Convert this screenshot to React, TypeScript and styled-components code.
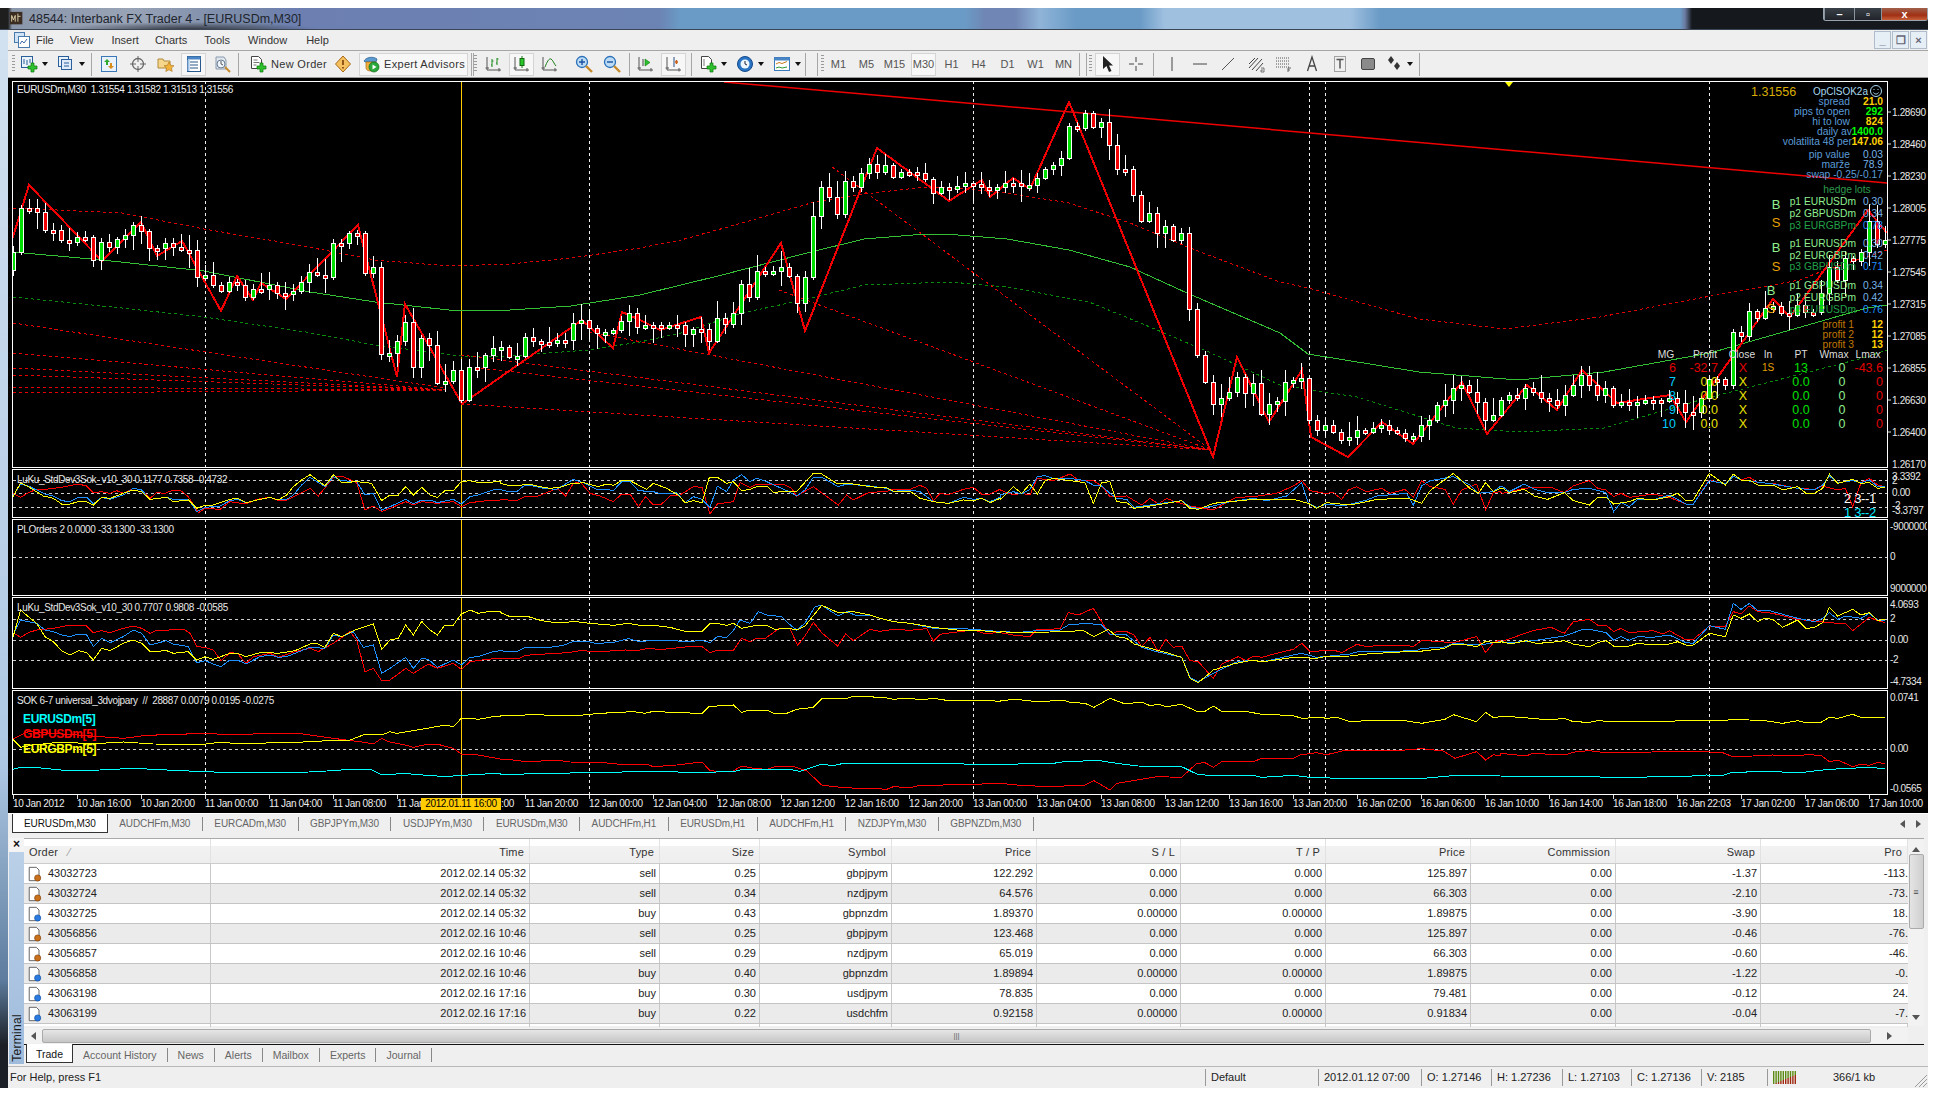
import styled, { createGlobalStyle } from "styled-components";
import { ReactNode } from "react";

const GlobalStyle = createGlobalStyle`
  html, body {
    margin: 0;
    background: #fff;
    font-family: "Liberation Sans", Arial, sans-serif;
    font-size: 11px;
    color: #222;
  }
`;

const Window = styled.div`
  width: 1928px;
  height: 1080px;
  margin-top: 8px;
  display: flex;
  flex-direction: column;
  overflow: hidden;
  background: linear-gradient(180deg, #d4e2f0 0%, #aec8e4 70%, #5d7c9e 90%, #1c2026 96%, #1c2026 100%);
`;

const TitleBar = styled.div`
  height: 21px;
  border-bottom: 1px solid #3a4656;
  display: flex;
  align-items: center;
  padding-left: 9px;
  gap: 4px;
  font-size: 12.5px;
  color: #20242c;
  background:
    radial-gradient(ellipse 130px 8px at 190px 22px, #2c3038 0%, rgba(44, 48, 56, 0) 100%),
    linear-gradient(90deg, #1e1e1e 0, #1e1e1e 8px, #8a96aa 12px, #98a3b6 130px, #7788a8 250px,
      #6c7fb0 290px, #6c84b4 660px, #6a9bc6 680px, #6a9bc6 965px, #7086b4 985px, #7086b4 1015px,
      #90b4d8 1040px, #6a9bc6 1075px, #6a9bc6 1140px, #a0c0e0 1165px, #a0c0e0 1350px, #6a9bc6 1380px,
      #6a9bc6 1680px, #6a7aa0 1685px, #15181c 1692px, #15181c 1928px);
`;

const WindowButtons = styled.div`
  margin-left: auto;
  align-self: flex-start;
  display: flex;
  height: 12px;
  border: 1px solid #9aa4ae;
  border-top: 0;
  border-radius: 0 0 3px 3px;
`;

const WindowButton = styled.div<{ $w: number; $close?: boolean }>`
  width: ${(p) => p.$w}px;
  display: flex;
  align-items: center;
  justify-content: center;
  color: #fff;
  font-weight: bold;
  font-size: 11px;
  border-left: 1px solid #8a949e;
  background: ${(p) =>
    p.$close
      ? "linear-gradient(180deg, #a0604a 0%, #a03014 60%, #c8603a 100%)"
      : "linear-gradient(180deg, #3a4048 0%, #20242a 100%)"};
`;

const Body = styled.div`
  margin-left: 8px;
  flex: 1;
  display: flex;
  flex-direction: column;
  background: #efefef;
`;

const MenuBar = styled.div`
  height: 20px;
  border-bottom: 1px solid #a6a6a6;
  display: flex;
  align-items: center;
  padding-left: 5px;
`;

const MenuItem = styled.span<{ $ml: number }>`
  margin-left: ${(p) => p.$ml}px;
  color: #333;
`;

const ChildButtons = styled.div`
  margin-left: auto;
  margin-right: 1px;
  display: flex;
  gap: 1px;
`;

const ChildButton = styled.div`
  width: 17px;
  height: 18px;
  border: 1px solid #aebccb;
  box-sizing: border-box;
  background: #e6eef6;
  color: #667;
  display: flex;
  align-items: center;
  justify-content: center;
  font-size: 11px;
  font-weight: bold;
`;

const Toolbar = styled.div`
  height: 26px;
  border-bottom: 1px solid #9c9c9c;
  display: flex;
  align-items: center;
`;

const Tool = styled.div<{ $w?: number; $ml?: number; $active?: boolean }>`
  width: ${(p) => p.$w ?? 25}px;
  height: 23px;
  margin-left: ${(p) => p.$ml ?? 3}px;
  flex: none;
  box-sizing: border-box;
  display: flex;
  align-items: center;
  justify-content: center;
  gap: 4px;
  color: #333;
  letter-spacing: 0.3px;
  border: 1px solid ${(p) => (p.$active ? "#d4d4d4" : "transparent")};
  background: ${(p) => (p.$active ? "#f7f7f7" : "transparent")};
`;

const Period = styled(Tool)`
  color: #555;
  letter-spacing: 0;
`;

const Caret = styled.div`
  width: 10px;
  flex: none;
  display: flex;
  justify-content: center;
  &::after {
    content: "";
    border: 3px solid transparent;
    border-top: 4px solid #111;
    border-bottom: 0;
  }
`;

const Sep = styled.div<{ $ml: number }>`
  width: 1px;
  height: 23px;
  margin-left: ${(p) => p.$ml}px;
  flex: none;
  background: #a6a6a6;
`;

const Grip = styled.div<{ $ml: number }>`
  width: 3px;
  height: 18px;
  margin-left: ${(p) => p.$ml}px;
  flex: none;
  background: repeating-linear-gradient(180deg, #9a9a9a 0 1px, transparent 1px 3px);
`;

const ChartArea = styled.div`
  position: relative;
  height: 735px;
  background: #000;
  padding: 3px 0 0 4px;
  box-sizing: border-box;
  color: #eee;
  font-size: 10px;
  letter-spacing: -0.35px;
`;

const Panels = styled.div`
  display: flex;
  flex-direction: column;
  gap: 1px;
`;

const PlotSvg = styled.svg`
  display: block;
  flex: none;
  font-family: "Liberation Sans", Arial, sans-serif;
  font-size: 10px;
  text {
    dominant-baseline: central;
    white-space: pre;
  }
`;

const OverlayGroup = styled.g`
  letter-spacing: 0;
`;

const TimeAxis = styled.div`
  display: flex;
  padding-left: 1px;
  height: 18px;
`;

const TimeCell = styled.div`
  position: relative;
  width: 64px;
  flex: none;
  line-height: 18px;
  white-space: nowrap;
  &::before {
    content: "";
    position: absolute;
    left: 0;
    top: 0;
    width: 1px;
    height: 4px;
    background: #ddd;
  }
`;

const DatePill = styled.div`
  position: absolute;
  left: 413px;
  top: 720px;
  width: 80px;
  height: 12px;
  line-height: 12px;
  text-align: center;
  white-space: nowrap;
  background: #ffcc00;
  color: #000;
`;

const ChartTabs = styled.div`
  height: 19px;
  border-top: 1px solid #fff;
  display: flex;
  padding-left: 4px;
  align-items: flex-end;
  color: #666;
  font-size: 10px;
  letter-spacing: -0.1px;
`;

const ChartTab = styled.div<{ $active?: boolean }>`
  height: ${(p) => (p.$active ? 19 : 14)}px;
  align-self: ${(p) => (p.$active ? "flex-end" : "center")};
  line-height: ${(p) => (p.$active ? 19 : 14)}px;
  padding: 0 ${(p) => (p.$active ? "11px" : "11.5px")};
  color: ${(p) => (p.$active ? "#111" : "#666")};
  background: ${(p) => (p.$active ? "#fff" : "transparent")};
  box-sizing: border-box;
  border: ${(p) => (p.$active ? "1px solid #333" : "0")};
  border-top: 0;
  border-right: ${(p) => (p.$active ? "1px solid #333" : "1px solid #888")};
`;

const TabArrows = styled.div`
  margin-left: auto;
  margin-right: 7px;
  align-self: center;
  display: flex;
  gap: 11px;
`;

const Terminal = styled.div`
  flex: 1;
  display: flex;
  padding-top: 5px;
  margin-bottom: 1px;
`;

const SideStrip = styled.div`
  width: 15px;
  margin-left: 1px;
  flex: none;
  display: flex;
  flex-direction: column;
`;

const CloseX = styled.div`
  height: 14px;
  text-align: center;
  font-weight: bold;
  font-size: 12px;
  line-height: 12px;
  background: #f4f4f4;
  color: #111;
`;

const TerminalLabel = styled.div`
  flex: 1;
  display: flex;
  align-items: flex-start;
  justify-content: center;
  background: linear-gradient(180deg, #bad0e8 0%, #9fbbdc 100%);
  margin-bottom: 1px;
  color: #1a1a1a;
  font-size: 12px;
  letter-spacing: 0.3px;
`;

const VerticalText = styled.span`
  writing-mode: vertical-rl;
  transform: rotate(180deg);
  margin-top: auto;
  margin-bottom: 2px;
`;

const TerminalMain = styled.div`
  flex: 1;
  min-width: 0;
  display: flex;
  flex-direction: column;
  margin-right: 4px;
`;

const TableWrap = styled.div`
  display: flex;
  height: 188px;
  background: #fff;
  border-top: 1px solid #aaa;
  box-sizing: border-box;
`;

const Table = styled.div`
  width: 1884px;
  flex: none;
`;

const columns = "187px 319px 130px 100px 132px 145px 144px 145px 145px 145px 145px 147px";

const HeaderRow = styled.div`
  height: 24px;
  display: grid;
  grid-template-columns: ${columns};
  background: linear-gradient(180deg, #fff 0%, #fff 30%, #f2f2f2 31%, #eee 100%);
  border-bottom: 1px solid #ccc;
  color: #333;
`;

const HeaderCell = styled.div<{ $left?: boolean }>`
  line-height: 27px;
  text-align: ${(p) => (p.$left ? "left" : "right")};
  padding: 0 5px;
  border-right: 1px solid #e2e2e2;
  letter-spacing: 0.2px;
  overflow: hidden;
  white-space: nowrap;
`;

const SortMark = styled.span`
  margin-left: 10px;
  color: #999;
`;

const Row = styled.div<{ $alt: boolean }>`
  height: 20px;
  box-sizing: border-box;
  display: grid;
  grid-template-columns: ${columns};
  background: ${(p) => (p.$alt ? "#ebebeb" : "#fff")};
  border-bottom: 1px solid #c4c4c4;
`;

const Cell = styled.div`
  line-height: 19px;
  text-align: right;
  padding-right: 3px;
  color: #222;
  border-right: 1px solid #c8c8c8;
  overflow: hidden;
  white-space: nowrap;
`;

const OrderCell = styled(Cell)`
  text-align: left;
  display: flex;
  align-items: center;
  gap: 5px;
  padding-left: 3px;
`;

const ClippedCell = styled(Cell)`
  border-right: 0;
  padding-right: 0;
`;

const RowStub = styled.div`
  height: 3px;
  display: grid;
  grid-template-columns: ${columns};
`;

const StubCell = styled.div`
  border-right: 1px solid #c8c8c8;
`;

const VScroll = styled.div`
  flex: 1;
  background: #f2f2f2;
  display: flex;
  flex-direction: column;
  align-items: center;
  color: #444;
`;

const VThumb = styled.div`
  margin-top: 2px;
  width: 15px;
  height: 75px;
  box-sizing: border-box;
  border: 1px solid #aaa;
  border-radius: 2px;
  background: linear-gradient(90deg, #e4e4e4, #cfcfcf);
  display: flex;
  align-items: center;
  justify-content: center;
  font-size: 9px;
  line-height: 4px;
`;

const ArrowUp = styled.div`
  margin-top: 8px;
  border: 4px solid transparent;
  border-bottom: 5px solid #555;
  border-top: 0;
`;

const ArrowDown = styled.div`
  margin-top: auto;
  margin-bottom: 6px;
  border: 4px solid transparent;
  border-top: 5px solid #555;
  border-bottom: 0;
`;

const HScroll = styled.div`
  height: 15px;
  margin-top: 2px;
  display: flex;
  align-items: center;
  background: #f2f2f2;
  margin-right: 16px;
`;

const HThumb = styled.div`
  flex: 1;
  height: 14px;
  box-sizing: border-box;
  border: 1px solid #aaa;
  border-radius: 2px;
  background: linear-gradient(180deg, #e6e6e6, #c6c6c6);
  display: flex;
  align-items: center;
  justify-content: center;
  color: #666;
  font-size: 8px;
`;

const HArrowCell = styled.div<{ $w: number }>`
  width: ${(p) => p.$w}px;
  flex: none;
  display: flex;
  justify-content: center;
`;

const ArrowLeft = styled.div`
  border: 4px solid transparent;
  border-right: 5px solid #555;
  border-left: 0;
`;

const ArrowRight = styled.div`
  border: 4px solid transparent;
  border-left: 5px solid #555;
  border-right: 0;
`;

const TerminalTabs = styled.div`
  height: 18px;
  margin-top: 1px;
  border-top: 1px solid #111;
  display: flex;
  padding-left: 2px;
  color: #666;
  font-size: 10.5px;
`;

const TerminalTab = styled.div<{ $active?: boolean }>`
  height: ${(p) => (p.$active ? 19 : 14)}px;
  margin-top: ${(p) => (p.$active ? -1 : 3)}px;
  line-height: ${(p) => (p.$active ? 21 : 14)}px;
  padding: 0 ${(p) => (p.$active ? "9px" : "10px")};
  box-sizing: border-box;
  background: ${(p) => (p.$active ? "#fff" : "transparent")};
  color: ${(p) => (p.$active ? "#111" : "#666")};
  border-right: 1px solid ${(p) => (p.$active ? "#333" : "#888")};
  border-left: ${(p) => (p.$active ? "1px solid #333" : "0")};
  border-bottom: ${(p) => (p.$active ? "1px solid #333" : "0")};
`;

const StatusBar = styled.div`
  height: 21px;
  border-top: 1px solid #b8b8b8;
  display: flex;
  align-items: center;
  position: relative;
  color: #222;
`;

const StatusField = styled.div<{ $w: number; $first?: boolean }>`
  width: ${(p) => p.$w}px;
  flex: none;
  box-sizing: border-box;
  height: 17px;
  line-height: 17px;
  padding-left: ${(p) => (p.$first ? 2 : 5)}px;
  border-left: ${(p) => (p.$first ? "0" : "1px solid #999")};
`;

const ConnField = styled(StatusField)`
  display: flex;
  align-items: center;
  gap: 36px;
`;

/* icons */
const Svg = ({ children, s = 18 }: { children: ReactNode; s?: number }) => (
  <svg width={s} height={s} viewBox="0 0 18 18" fill="none">
    {children}
  </svg>
);

const Plus = () => <path d="M11 8h3v3h3v3h-3v3h-3v-3H8v-3h3z" fill="#2fc02f" stroke="#0a7a0a" strokeWidth=".7" />;

const Axes = () => <path d="M2 2v13h14M0.5 13H4M14 13v3.5" stroke="#555" />;

const IconNewChart = () => (
  <Svg>
    <rect x="1.5" y="1.5" width="11" height="11" fill="#eaf2fb" stroke="#2a5f9a" />
    <path d="M4 9V4M7 10V5M10 8V4" stroke="#2a5f9a" />
    <Plus />
  </Svg>
);
const IconProfiles = () => (
  <Svg>
    <rect x="1.5" y="1.5" width="10" height="10" fill="#eaf2fb" stroke="#2a5f9a" />
    <rect x="4.5" y="4.5" width="10" height="10" fill="#dfeafb" stroke="#2a5f9a" />
    <path d="M7 8h5M7 11h5" stroke="#2a5f9a" />
  </Svg>
);
const IconMarket = () => (
  <Svg>
    <rect x="1.5" y="1.5" width="15" height="15" fill="#e9f1fa" stroke="#3a78b8" />
    <path d="M7 4l3 3H8v3H6V7H4z" fill="#2fa82f" />
    <path d="M11 14l-3-3h2V8h2v3h2z" fill="#d88a1a" />
  </Svg>
);
const IconCrosshair = () => (
  <Svg>
    <circle cx="9" cy="9" r="5.5" stroke="#666" strokeWidth="1.3" />
    <path d="M9 1v6M9 11v6M1 9h6M11 9h6" stroke="#666" />
  </Svg>
);
const IconFolderStar = () => (
  <Svg>
    <path d="M1 4h5l1 2h6v7H1z" fill="#f6d68a" stroke="#b08a3a" />
    <path d="M12 7l1.6 3.3 3.4.4-2.5 2.3.7 3.5-3.2-1.8-3.2 1.8.7-3.5L7 10.7l3.4-.4z" fill="#f2b23a" stroke="#a8701a" strokeWidth=".6" />
  </Svg>
);
const IconTerminal = () => (
  <Svg>
    <rect x="2.5" y="1.5" width="13" height="15" fill="#fff" stroke="#28588c" />
    <rect x="2.5" y="1.5" width="13" height="3" fill="#4a86c6" />
    <path d="M5 7h8M5 10h8M5 13h8" stroke="#28588c" />
    <rect x="2.5" y="5" width="2" height="11" fill="#9cc0e6" />
  </Svg>
);
const IconTester = () => (
  <Svg>
    <path d="M3 2h8l2 3v9H3z" fill="#dfe6ee" stroke="#8a9aae" />
    <circle cx="8" cy="9" r="4" fill="#eef4fb" stroke="#6a7c92" />
    <path d="M8 6v3l2 1" stroke="#555" />
    <path d="M12 12l5 5" stroke="#c88a2a" strokeWidth="2" />
  </Svg>
);
const IconNewOrder = () => (
  <Svg>
    <path d="M2.5 1.5h7l3 3v9h-10z" fill="#fff" stroke="#444" />
    <path d="M4.5 5h4M4.5 7.5h6M4.5 10h3" stroke="#777" />
    <Plus />
  </Svg>
);
const IconWarn = () => (
  <Svg>
    <path d="M9 1l7.5 8L9 17 1.5 9z" fill="#f4c060" stroke="#a86a14" />
    <path d="M9 5v5M9 12v1.5" stroke="#7a3c08" strokeWidth="1.6" />
  </Svg>
);
const IconExpert = () => (
  <Svg>
    <path d="M2 6c2-4 9-5 13-2l-1 3H3z" fill="#5a9ad0" stroke="#2a5a8a" strokeWidth=".7" />
    <path d="M4 7h10v6c0 2-2 3-5 3s-5-1-5-3z" fill="#f0b040" stroke="#a87018" strokeWidth=".7" />
    <circle cx="12" cy="12" r="5" fill="#2aa83a" stroke="#0c6a1a" strokeWidth=".7" />
    <path d="M10.5 9.5l4 2.5-4 2.5z" fill="#fff" />
  </Svg>
);
const IconBars = () => (
  <Svg>
    <Axes />
    <path d="M7 4v8M6 10h1M7 6h1.5M12 3v7M11 8h1M12 4h1.5" stroke="#1a8a1a" />
  </Svg>
);
const IconCandles = () => (
  <Svg>
    <Axes />
    <path d="M9 1v12" stroke="#1a7a1a" />
    <rect x="7" y="3.5" width="4" height="7" fill="#29c729" stroke="#116a11" />
  </Svg>
);
const IconLine = () => (
  <Svg>
    <Axes />
    <path d="M4 12c2-5 4-9 6-8s3 5 5 7" stroke="#1a7a1a" />
  </Svg>
);
const IconZoom = ({ plus }: { plus?: boolean }) => (
  <Svg>
    <circle cx="7" cy="7" r="5.5" fill="#bcdcf6" stroke="#2a70b8" strokeWidth="1.3" />
    <path d={plus ? "M4 7h6M7 4v6" : "M4 7h6"} stroke="#1a50a0" strokeWidth="1.4" />
    <path d="M11 11l6 6" stroke="#c88a2a" strokeWidth="2.4" />
  </Svg>
);
const IconScroll = () => (
  <Svg>
    <Axes />
    <path d="M6 4v7" stroke="#444" />
    <path d="M8 4l5 3.5-5 3.5z" fill="#2fc02f" stroke="#117a11" strokeWidth=".6" />
  </Svg>
);
const IconShift = () => (
  <Svg>
    <Axes />
    <path d="M9 2v10" stroke="#28508c" />
    <path d="M10 7h3M11.5 5v4" stroke="#c8601a" strokeWidth="1.5" />
  </Svg>
);
const IconIndicators = () => (
  <Svg>
    <path d="M2.5 1.5h7l3 3v9h-10z" fill="#fff" stroke="#444" />
    <path d="M5 4v7" stroke="#777" />
    <Plus />
  </Svg>
);
const IconClock = () => (
  <Svg>
    <circle cx="9" cy="9" r="7.5" fill="#2a74c4" stroke="#144a8c" />
    <circle cx="9" cy="9" r="4.5" fill="#eef6fd" />
    <path d="M9 6v3l2 1" stroke="#223" />
  </Svg>
);
const IconTemplate = () => (
  <Svg>
    <rect x="1.5" y="2.5" width="15" height="13" fill="#fff" stroke="#3a78b8" />
    <rect x="1.5" y="2.5" width="15" height="3" fill="#4a86c6" />
    <path d="M3 9l3-1.5 3 1 5-2" stroke="#c87a1a" />
    <path d="M3 13l3-1 3 1 5-1" stroke="#2f9a2f" />
  </Svg>
);
const IconCursor = () => (
  <Svg>
    <path d="M4 1v13l3.5-3 2.5 6 2.5-1-2.5-5.5H14z" fill="#222" />
  </Svg>
);
const IconCross = () => (
  <Svg>
    <path d="M9 2v5M9 11v5M2 9h5M11 9h5" stroke="#444" />
  </Svg>
);
const IconChannel = () => (
  <Svg>
    <path d="M2 13L11 3M5 15L15 4M2 9l6-6M9 16l7-8" stroke="#444" />
    <path d="M14 13h3v4h-3v-2h2" stroke="#444" strokeWidth=".7" />
  </Svg>
);
const IconFibo = () => (
  <Svg>
    <path d="M1 3h14M1 6h14M1 9h14M1 12h14" stroke="#555" strokeDasharray="1 1" />
    <path d="M13 13h3M13 13v4M13 15h2" stroke="#444" strokeWidth=".8" />
  </Svg>
);
const IconLabel = () => (
  <Svg>
    <rect x="3.5" y="1.5" width="11" height="15" stroke="#555" strokeDasharray="1 1" />
    <path d="M5.5 4.5h7M9 4.5v9" stroke="#555" strokeWidth="1.5" />
  </Svg>
);
const IconRect = () => (
  <Svg>
    <rect x="2.5" y="3.5" width="13" height="11" rx="1.5" fill="#8a8a8a" stroke="#444" />
  </Svg>
);
const IconArrows = () => (
  <Svg>
    <path d="M6 1l3 4H3zM6 9L3 5h6zM12 7l3 4H9zM12 15l-3-4h6z" fill="#333" />
  </Svg>
);
const IconTicket = ({ sell }: { sell: boolean }) => (
  <Svg s={16}>
    <path d="M2.5 1.5h8l3 3v12h-11z" fill="#fff" stroke="#555" />
    <circle cx="12" cy="13.5" r="3.5" fill={sell ? "#c8701a" : "#2a7ae0"} stroke={sell ? "#7a3c08" : "#0c4aa0"} strokeWidth=".7" />
  </Svg>
);
const AppIcon = () => (
  <Svg>
    <rect x="1.5" y="1.5" width="10" height="10" fill="#cfe2f6" stroke="#4a7aaa" />
    <rect x="5.5" y="5.5" width="11" height="11" fill="#fff" stroke="#4a7aaa" />
    <path d="M7 13l2-3 2 2 3-4" stroke="#3a6aaa" />
  </Svg>
);
const TitleIcon = () => (
  <Svg s={16}>
    <rect x="1" y="1" width="14" height="14" fill="#3a2c20" />
    <path d="M3 12V5l2 5 2-5v7M10 12V3M10 6h3" stroke="#e8d8b0" />
  </Svg>
);
const ConnIcon = () => (
  <svg width="24" height="13" viewBox="0 0 24 13">
    {Array.from({ length: 10 }, (_, i) => (
      <g key={i}>
        <rect x={i * 2.4} y={0} width={1.4} height={13 - i} fill="#5a8a10" />
        <rect x={i * 2.4} y={13 - i} width={1.4} height={i} fill="#a02810" />
      </g>
    ))}
  </svg>
);
const GripSvg = styled.svg`
  position: absolute;
  right: 0;
  bottom: 0;
`;
const ResizeGrip = () => (
  <GripSvg width="16" height="16" viewBox="0 0 16 16">
    <path d="M15 3L3 15M15 7L7 15M15 11l-4 4" stroke="#999" />
  </GripSvg>
);

/* chart data, in page pixels */
const closes = [
  252, 208, 208, 212, 230, 230, 240, 242, 237, 237, 260, 242, 247, 239, 235, 225, 231, 248, 248, 243,
  247, 250, 250, 277, 275, 285, 291, 282, 285, 297, 289, 289, 285, 293, 294, 291, 282, 272, 275, 277,
  243, 243, 233, 233, 273, 267, 354, 353, 341, 322, 367, 338, 345, 383, 381, 370, 400, 367, 367, 355,
  348, 347, 357, 356, 337, 341, 342, 342, 340, 340, 323, 320, 328, 333, 332, 330, 321, 313, 327,
  325, 325, 327, 325, 325, 334, 329, 329, 341, 318, 324, 313, 284, 297, 271, 273, 271, 267, 276, 303,
  277, 216, 187, 197, 214, 181, 187, 173, 164, 172, 165, 177, 172, 172, 173, 179, 193, 187, 189, 186,
  183, 184, 187, 190, 187, 183, 183, 186, 185, 178, 169, 165, 158, 126, 128, 113, 127, 122, 145, 169,
  169, 195, 221, 213, 233, 226, 240, 233, 309, 355, 382, 404, 398, 392, 377, 393, 383, 414, 404, 401,
  382, 380, 378, 420, 430, 425, 432, 440, 437, 430, 432, 428, 425, 430, 433, 438, 436, 425, 420, 405,
  400, 388, 385, 392, 402, 420, 415, 400, 395, 398, 388, 392, 398, 400, 405, 395, 385, 375, 385, 395, 388,
  405, 402, 405, 402, 400, 400, 401, 398, 403, 412, 412, 398, 379, 379, 385, 332, 336, 311, 318, 308,
  306, 313, 315, 305, 312, 312, 293, 267, 280, 258, 261, 252, 221, 244, 240,
];

const noise = (i: number, salt: number) => {
  const v = Math.abs(Math.sin(i * 12.9898 + salt) * 43758.5453) % 1;
  return 2 + v * v * 15;
};

const zigzag =
  "12,240 29,185 102,261 141,222 157,256 182,241 221,311 237,276 253,300 261,283 286,299 358,225 397,377 405,304 462,404 582,320 613,348 622,312 640,320 660,330 701,317 709,353 781,243 805,331 877,148 949,201 982,180 990,197 1013,178 1030,189 1069,102 1213,457 1237,357 1269,422 1302,370 1311,437 1348,457 1382,422 1413,444 1462,382 1487,434 1527,385 1557,410 1582,370 1617,403 1670,395 1686,422 1773,299 1790,317 1868,210 1887,233";
const maMiddle =
  "13,252 102,260 204,271 310,292 375,302 449,310 510,310 571,306 640,295 722,275 803,254 864,239 926,234 958,235 1007,239 1069,250 1130,267 1187,293 1280,333 1308,354 1419,372 1518,380 1604,372 1710,353 1867,308 1887,305";
const maUpper =
  "13,208 122,213 204,229 298,245 375,260 449,266 510,264 571,258 640,248 681,240 742,223 811,203 864,194 926,187 967,189 1007,193 1069,203 1130,223 1195,250 1280,282 1308,288 1419,319 1505,329 1600,317 1700,298 1800,280 1820,272 1887,250";
const maLower =
  "13,297 122,308 204,317 306,332 375,345 461,356 510,356 588,350 640,342 681,333 742,313 803,300 864,285 950,282 1007,287 1089,302 1150,327 1211,353 1280,385 1357,397 1456,428 1518,432 1604,428 1700,400 1867,357 1887,350";
const fans = [
  [13, 323, 445, 388], [13, 353, 445, 390], [13, 368, 445, 390], [13, 375, 445, 390], [13, 387, 445, 390], [13, 393, 445, 390],
  [832, 167, 1211, 450], [779, 290, 1211, 450], [589, 332, 1211, 450], [461, 355, 1211, 450], [469, 367, 1211, 450], [461, 404, 1211, 450],
];
const dayLines = [205, 589, 973, 1309, 1325, 1709];

const trace = (...parts: [number, string][]) =>
  parts
    .map(([ox, pts]) =>
      pts
        .split(" ")
        .map((p) => {
          const [x, y] = p.split(",").map(Number);
          return `${ox + x / 3},${460 + y / 3}`;
        })
        .join(" ")
    )
    .join(" ");

const std1 = [
  trace(
    [0, "38,100 62,112 85,98 110,88 135,88 185,82 235,72 260,78 280,98 305,95 330,100 350,92 370,100 400,85 425,90 450,115 470,98 495,100 520,90 540,90 565,110 595,158 616,145 660,148 690,125 738,132 770,118 810,112 835,122 860,120 880,110 930,85 955,108 1000,52 1025,48 1070,68 1095,150 1120,138 1145,155 1170,145 1217,125 1240,135 1265,125 1310,130 1360,125 1384,140 1410,128 1460,122 1500,120"],
    [500, "0,118 50,122 75,110 110,110 160,90 175,88 197,108 220,70 240,65 270,100 300,108 340,125 365,102 390,102 415,140 437,110 460,135 485,132 510,108 540,105 580,80 606,82 630,162 652,132 700,125 720,68 750,82 770,72 810,72 850,72 875,85 890,108 940,80 1015,135 1040,105 1060,120 1105,98 1160,94 1180,88 1230,88 1260,76 1280,85 1300,122 1320,100 1345,104 1390,88 1420,82 1445,102 1470,102 1500,88"],
    [1000, "0,90 40,105 65,100 90,105 112,55 160,62 210,42 235,60 280,62 305,78 330,110 380,108 425,135 450,115 475,132 500,115 525,125 570,138 640,150 690,122 710,112 760,110 830,100 880,78 905,62 930,92 975,100 1000,98 1025,118 1045,90 1070,80 1100,95 1145,85 1170,100 1215,88 1240,112 1265,62 1290,80 1335,88 1360,132 1385,90 1430,72 1457,150 1480,98 1500,95"],
    [1436, "200,100 265,85 295,82 345,82 385,98 412,78 460,62 485,85 510,90 533,110 555,100 580,112 650,102 700,112 750,132 772,132 820,60 868,72 892,48 915,60 940,52 965,68 1010,70 1085,85 1135,88 1160,78 1205,90 1228,85 1250,140 1275,68 1300,55 1325,75 1348,80"]
  ),
  trace(
    [0, "38,110 62,72 85,78 110,90 135,102 160,108 185,122 210,125 235,112 260,112 280,132 305,112 330,118 370,105 400,85 425,90 450,118 500,112 520,118 565,118 590,155 616,142 660,138 690,122 712,118 738,128 770,120 810,112 835,120 860,118 880,105 905,75 930,52 975,80 1000,50 1025,62 1070,65 1095,105 1120,100 1145,150 1170,140 1217,118 1240,132 1265,120 1290,120 1312,128 1360,118 1384,132 1410,110 1435,105 1480,90 1500,88"],
    [500, "0,88 25,95 50,95 75,75 100,78 130,85 170,88 220,58 250,68 295,90 320,88 340,92 365,65 390,65 415,92 460,95 485,102 530,98 555,128 580,110 606,118 630,142 652,78 680,95 700,60 725,44 750,65 770,55 800,65 815,72 865,94 890,108 915,90 940,52 965,52 1015,80 1040,72 1110,78 1160,85 1180,94 1230,90 1260,95 1300,125 1345,130 1390,112 1420,118 1445,115 1470,125 1500,112"],
    [1000, "0,105 40,95 65,102 90,88 112,50 135,47 160,55 210,55 255,62 280,75 305,78 330,100 350,115 380,118 402,142 450,135 500,128 545,122 570,140 595,146 640,138 690,125 760,115 800,122 860,108 905,68 925,130 950,142 980,132 1030,138 1100,120 1130,108 1220,100 1240,135 1265,78 1290,62 1360,50 1410,75 1435,100 1480,95 1500,80"],
    [1436, "200,80 220,95 265,72 295,88 335,98 385,98 412,88 460,85 510,98 533,155 555,128 580,140 605,118 650,120 700,105 750,132 772,132 820,62 868,72 892,48 915,60 1010,72 1085,85 1135,90 1160,75 1180,48 1205,68 1250,62 1275,68 1300,60 1325,80 1348,80"]
  ),
  trace(
    [0, "38,112 62,68 85,80 130,108 160,115 185,132 210,132 235,125 260,125 280,135 305,112 330,115 370,100 400,90 425,95 450,118 500,112 520,125 565,120 590,145 616,135 640,135 660,128 690,118 712,115 738,128 770,120 810,112 835,120 860,105 880,80 905,60 930,44 975,78 1000,44 1025,68 1070,65 1115,70 1145,122 1170,105 1195,105 1217,80 1240,105 1265,82 1290,105 1312,112 1335,92 1360,92 1384,65 1410,62 1435,68 1500,65"],
    [500, "0,70 25,76 60,76 85,72 120,80 150,85 180,82 210,72 250,68 295,80 320,72 340,76 365,62 390,62 440,88 460,70 500,85 535,105 555,128 580,122 606,128 628,52 652,52 680,70 700,65 725,92 750,88 775,78 800,78 820,97 865,94 890,94 940,40 965,42 1010,70 1060,72 1110,80 1160,84 1180,94 1230,94 1260,115 1300,125 1345,130 1390,120 1420,122 1445,115 1470,128 1500,115"],
    [1000, "0,120 40,80 65,100 90,72 112,102 135,62 160,55 210,62 255,68 280,130 305,68 330,65 350,125 380,128 402,145 450,138 500,130 545,122 570,145 595,148 640,130 690,125 760,118 800,120 880,118 925,130 950,145 980,128 1050,135 1100,125 1130,118 1225,115 1265,130 1290,92 1360,40 1410,85 1435,100 1457,68 1480,95 1500,85"],
    [1436, "200,85 220,98 265,88 295,108 335,118 385,98 412,122 460,135 485,112 510,112 533,132 580,125 605,115 650,120 700,110 725,100 750,122 772,120 820,40 868,75 892,42 915,60 940,60 965,75 1010,75 1040,90 1085,80 1110,100 1135,100 1160,85 1180,42 1205,70 1250,58 1275,70 1300,68 1325,85 1348,82"]
  ),
];

const std2 = [
  trace(
    [0, "38,518 62,532 85,518 110,510 160,505 210,495 260,498 280,518 305,512 330,518 370,505 400,498 425,505 450,520 470,510 495,512 520,508 555,510 570,520 590,560 616,562 640,570 663,602 690,578 712,580 738,610 760,590 810,580 835,592 885,575 930,565 955,575 1000,550 1050,515 1070,540 1095,635 1120,625 1145,662 1170,660 1217,625 1240,640 1285,612 1312,625 1360,610 1384,628 1410,605 1460,598 1500,595"],
    [500, "0,596 55,596 75,586 150,581 205,578 240,572 300,575 375,570 415,571 440,566 490,568 555,561 606,560 630,578 652,571 700,571 725,535 750,546 770,534 795,536 835,507 870,506 893,556 915,528 940,487 965,518 1013,558 1037,522 1060,542 1110,508 1140,514 1180,508 1230,511 1280,506 1300,543 1320,523 1370,516 1420,510 1460,522 1500,516"],
    [1000, "0,518 40,525 90,530 110,510 180,506 205,458 235,465 280,445 330,525 350,515 380,515 402,525 425,560 450,532 475,575 497,538 520,562 545,558 570,602 595,605 640,655 665,612 715,590 737,602 760,588 785,592 830,580 880,568 905,550 930,575 1000,570 1025,578 1070,553 1100,560 1145,555 1215,555 1240,560 1265,541 1360,548 1430,530 1457,578 1480,548 1500,540"],
    [1436, "195,545 225,535 290,512 345,502 385,520 412,485 460,478 485,495 510,495 533,515 555,505 580,518 650,512 680,522 700,512 750,540 772,538 820,498 868,498 892,455 915,462 940,438 965,455 1010,460 1085,478 1135,483 1180,488 1230,492 1250,512 1300,472 1325,482 1348,488"]
  ),
  trace(
    [0, "38,528 62,480 85,485 110,490 135,510 160,515 185,525 210,530 235,522 260,525 280,560 305,535 330,548 370,530 400,510 425,520 450,555 500,542 520,552 565,560 590,608 616,602 640,612 663,620 690,600 712,600 738,612 780,590 810,585 835,592 860,590 930,562 975,565 1000,525 1025,530 1060,515 1090,562 1120,555 1145,640 1170,625 1217,592 1240,625 1265,595 1285,598 1312,622 1360,600 1384,615 1410,592 1435,590 1480,575 1500,572"],
    [500, "0,572 25,575 50,575 75,562 150,562 190,556 220,544 270,546 290,551 345,546 385,536 415,544 510,540 555,546 606,541 630,548 652,530 680,532 700,512 720,480 750,490 775,455 800,465 845,470 865,490 890,510 915,490 945,440 965,436 1015,468 1040,455 1065,465 1110,465 1140,475 1180,485 1230,490 1300,505 1370,505 1420,508 1500,515"],
    [1000, "0,513 50,518 110,512 180,510 205,495 260,490 305,495 330,522 380,525 425,562 470,575 545,592 570,652 595,665 640,640 710,606 760,600 785,606 880,585 905,580 950,592 1050,582 1070,576 1130,575 1250,572 1265,565 1330,562 1360,550 1440,555 1500,545"],
    [1436, "195,545 225,548 300,541 340,535 385,528 435,510 460,508 510,518 533,540 555,530 580,541 605,530 650,532 700,525 750,548 772,550 820,497 868,508 892,430 915,448 940,430 965,452 1000,452 1085,475 1135,485 1160,475 1180,458 1205,478 1228,468 1275,475 1300,460 1325,480 1348,482"]
  ),
  trace(
    [0, "38,535 62,450 85,470 110,490 135,530 160,545 185,572 210,585 235,572 260,578 280,600 305,565 330,572 370,550 400,540 425,550 450,575 500,572 520,580 565,575 590,600 616,590 640,598 690,580 712,580 738,590 780,578 810,578 835,580 885,572 930,552 950,550 975,562 1000,520 1025,530 1070,508 1120,492 1145,568 1170,540 1195,535 1217,495 1240,525 1265,484 1290,510 1312,525 1335,495 1360,495 1384,462 1410,450 1435,460 1465,455 1500,455"],
    [500, "0,457 30,470 85,470 125,482 165,488 230,485 270,490 340,496 385,490 430,498 460,496 510,502 555,514 606,514 628,492 652,490 680,496 700,490 725,505 770,496 800,496 825,508 865,505 890,510 915,498 965,436 1015,458 1060,455 1110,465 1140,475 1180,485 1230,490 1300,502 1370,510 1420,510 1500,517"],
    [1000, "0,515 50,518 150,516 250,512 282,530 325,508 350,530 380,535 402,552 450,565 500,578 545,592 570,655 595,668 640,630 700,612 760,600 785,606 880,592 950,595 975,590 1050,588 1100,582 1200,576 1250,575 1330,566 1360,552 1400,555 1430,560 1455,545 1500,548"],
    [1436, "195,545 225,552 270,542 300,550 340,548 385,542 412,552 460,560 485,548 510,542 533,558 580,558 605,550 650,555 700,552 725,545 750,555 772,555 820,520 868,530 892,465 915,475 940,462 965,485 985,475 1010,478 1040,502 1085,480 1110,506 1135,502 1160,488 1180,442 1205,468 1250,448 1275,465 1300,458 1325,482 1348,478"]
  ),
];

const sok = [
  trace(
    [0, "38,838 62,825 85,815 160,820 300,830 370,835 440,826 620,820 700,825 800,820 910,822 1000,835 1100,848 1120,852 1145,835 1165,845 1215,855 1240,862 1285,852 1310,852 1360,865 1384,882 1435,885 1500,897"],
    [500, "0,898 40,900 70,904 180,902 210,906 300,907 380,915 440,913 460,920 530,915 606,906 628,930 652,935 700,933 725,918 760,925 800,928 830,918 875,918 920,932 965,975 1000,980 1070,985 1120,985 1160,988 1180,980 1230,983 1260,976 1300,978 1340,974 1420,973 1500,970"],
    [1000, "0,970 60,976 150,980 255,975 282,962 330,990 350,970 410,960 470,950 545,952 590,910 615,908 640,922 665,905 760,905 785,895 880,895 900,885 950,878 980,884 1040,870 1215,870 1265,866 1330,873 1365,895 1430,875 1457,900 1480,884 1500,888"],
    [1436, "195,880 270,888 290,880 385,885 420,875 460,872 500,877 800,875 860,878 890,890 950,888 1010,885 1085,888 1110,884 1155,886 1180,905 1205,900 1250,920 1275,912 1300,916 1325,907 1348,912"]
  ),
  trace(
    [0, "38,928 62,922 100,922 165,928 200,932 300,930 400,925 500,930 610,935 700,938 890,938 980,933 1050,928 1115,930 1145,945 1215,940 1240,943 1310,948 1360,948 1435,943 1500,940"],
    [500, "0,942 60,943 100,940 200,940 230,937 350,937 400,934 600,937 700,935 720,930 870,928 900,934 960,914 1005,916 1030,910 1100,912 1280,910 1500,914"],
    [1000, "0,913 160,910 200,904 300,902 350,910 415,918 545,920 590,942 640,948 760,946 785,952 880,946 930,952 1020,955 1270,955 1370,946 1500,948"],
    [1436, "195,948 380,948 530,952 740,950 810,945 860,946 890,937 975,935 1100,937 1180,928 1300,922 1348,926"]
  ),
  trace(
    [0, "38,838 62,862 100,855 165,848 300,850 370,846 460,852 610,853 650,848 730,850 870,848 985,842 1050,840 1095,823 1145,825 1170,815 1190,820 1265,808 1335,795 1360,800 1384,775 1410,775 1435,778 1480,770 1500,770"],
    [500, "0,768 100,764 165,766 240,766 300,760 400,755 435,760 460,754 530,758 606,760 628,738 652,738 700,735 725,757 750,750 800,750 820,760 860,760 890,748 940,742 965,716 1040,715 1060,709 1150,712 1180,718 1230,714 1260,720 1300,715 1340,721 1420,723 1440,720 1500,724"],
    [1000, "0,722 50,718 110,725 190,721 210,727 255,730 282,742 330,715 370,730 430,728 450,737 475,733 500,740 545,733 590,754 615,754 640,738 665,754 700,756 730,753 780,762 880,767 905,775 960,772 980,775 1010,772 1050,785 1100,782 1215,782 1265,790 1335,778 1360,764 1430,785 1457,757 1480,773 1500,770"],
    [1436, "195,768 290,775 340,780 385,775 412,785 460,787 485,782 530,785 710,785 720,782 860,782 890,778 940,780 985,782 1040,790 1085,782 1110,788 1155,787 1180,772 1205,775 1250,763 1275,772 1348,772"]
  ),
];

const stdColors = ["#ff0000", "#1e90ff", "#ffff00"];
const sokColors = ["#ff0000", "#00ffff", "#ffff00"];

type Note = { x: number; y: number; t: string; c?: string; s?: number; a?: "start" | "middle" | "end"; w?: number };
const N = (x: number, y: number, t: string, c?: string, s?: number, a?: Note["a"], w?: number): Note => ({ x, y, t, c, s, a, w });

const BLUE = "#5c9bd8";
const LIME = "#90ee90";
const GOLD = "#ffd000";
const SMALL = 10.3;
const BIG = 12.5;

const stat = (y: number, label: string, value: string, vc: string, bold = false, lx = 1850) => [
  N(lx, y, label, BLUE, SMALL, "end"),
  N(1883, y, value, vc, SMALL, "end", bold ? 700 : undefined),
];
const hedge = (y: number, label: string, value: string, green = LIME, vc = "#78b4e8") => [
  N(1856, y, label, green, SMALL, "end"),
  N(1883, y, value, vc, SMALL, "end"),
];
const profit = (y: number, label: string, value: string) => [
  N(1854, y, label, "#c07800", SMALL, "end"),
  N(1883, y, value, GOLD, SMALL, "end", 700),
];

const mainNotes: Note[] = [
  N(1751, 92, "1.31556", "#d8ac00", BIG),
  N(1868, 91, "OpClSOK2a", "#a8d8f0", 10, "end"),
  ...stat(101, "spread", "21.0", GOLD, true),
  ...stat(111, "pips to open", "292", "#00ff00", true),
  ...stat(121, "hi to low", "824", GOLD, true),
  ...stat(131, "daily av", "1400.0", "#00ff00", true, 1852),
  ...stat(141, "volatilita 48 per", "147.06", GOLD, true, 1852),
  ...stat(154, "pip value", "0.03", "#78b4e8"),
  ...stat(164, "marže", "78.9", "#78b4e8"),
  N(1883, 174, "swap -0.25/-0.17", BLUE, SMALL, "end"),
  N(1847, 189, "hedge lots", "#2e9a4e", SMALL, "middle"),
  N(1776, 204, "B", LIME, 13, "middle"), N(1776, 222, "S", "#e8a000", 13, "middle"),
  N(1776, 247, "B", LIME, 13, "middle"), N(1776, 266, "S", "#e8a000", 13, "middle"),
  N(1771, 290, "B", LIME, 13, "middle"), N(1771, 308, "S", "#e8a000", 13, "middle"),
  ...hedge(201, "p1 EURUSDm", "0.30"),
  ...hedge(213, "p2 GBPUSDm", "0.34"),
  ...hedge(225, "p3 EURGBPm", "0.78", "#22a04a", "#1e90ff"),
  ...hedge(243, "p1 EURUSDm", "0.30"),
  ...hedge(255, "p2 EURGBPm", "0.42"),
  ...hedge(266, "p3 GBPUSDm", "0.71", "#22a04a", "#1e90ff"),
  ...hedge(285, "p1 GBPUSDm", "0.34"),
  ...hedge(297, "p2 EURGBPm", "0.42"),
  ...hedge(309, "p3 EURUSDm", "0.76", "#22a04a", "#1e90ff"),
  ...profit(324, "profit 1", "12"),
  ...profit(334, "profit 2", "12"),
  ...profit(344, "profit 3", "13"),
  N(1666, 354, "MG", "#ddd", SMALL, "middle"), N(1705, 354, "Profit", "#ddd", SMALL, "middle"),
  N(1742, 354, "Close", "#ddd", SMALL, "middle"), N(1768, 354, "In", "#ddd", SMALL, "middle"),
  N(1801, 354, "PT", "#ddd", SMALL, "middle"), N(1834, 354, "Wmax", "#ddd", SMALL, "middle"),
  N(1868, 354, "Lmax", "#ddd", SMALL, "middle"),
  N(1676, 368, "6", "#e00000", BIG, "end"), N(1718, 368, "-32.7", "#e00000", BIG, "end"),
  N(1743, 368, "X", "#e00000", BIG, "middle"), N(1768, 367, "1S", "#e8a000", 10, "middle"),
  N(1801, 368, "13", "#00e000", BIG, "middle"), N(1842, 368, "0", LIME, BIG, "middle"),
  N(1883, 368, "-43.6", "#e00000", BIG, "end"),
  ...([["7", 382], ["8", 396], ["9", 410], ["10", 424]] as [string, number][]).flatMap(([m, y]) => [
    N(1676, y, m, "#00ccff", BIG, "end"),
    N(1718, y, "0.0", "#e8e000", BIG, "end"),
    N(1743, y, "X", "#e8e000", BIG, "middle"),
    N(1801, y, "0.0", "#00e000", BIG, "middle"),
    N(1842, y, "0", LIME, BIG, "middle"),
    N(1883, y, "0", "#e00000", BIG, "end"),
  ]),
];

const priceLabels = ["1.28690", "1.28460", "1.28230", "1.28005", "1.27775", "1.27545", "1.27315", "1.27085", "1.26855", "1.26630", "1.26400"];

const Notes = ({ list }: { list: Note[] }) => (
  <>
    {list.map((n, i) => (
      <text key={i} x={n.x} y={n.y} fill={n.c ?? "#e8e8e8"} fontSize={n.s} textAnchor={n.a ?? "start"} fontWeight={n.w}>
        {n.t}
      </text>
    ))}
  </>
);

const Plot = ({ top, height, grid, children }: { top: number; height: number; grid: number[]; children?: ReactNode }) => (
  <PlotSvg width={1915} height={height} viewBox={`12 ${top} 1915 ${height}`}>
    <g strokeWidth="1" shapeRendering="crispEdges">
      {grid.map((y) => (
        <line key={y} x1={13} x2={1887} y1={y + 0.5} y2={y + 0.5} stroke="#ccc" strokeDasharray="3 3" />
      ))}
      {dayLines.map((x) => (
        <line key={x} x1={x + 0.5} x2={x + 0.5} y1={top} y2={top + height} stroke="#eee" strokeDasharray="3 3" />
      ))}
      <line x1={461.5} x2={461.5} y1={top} y2={top + height} stroke="#ffcc00" />
    </g>
    {children}
    <rect x={12.5} y={top + 0.5} width={1875} height={height - 1} fill="none" stroke="#fff" shapeRendering="crispEdges" />
  </PlotSvg>
);

const Lines = ({ series, colors }: { series: string[]; colors: string[] }) => (
  <g fill="none" strokeWidth="1" shapeRendering="crispEdges">
    {series.map((points, i) => (
      <polyline key={i} points={points} stroke={colors[i]} />
    ))}
  </g>
);

const Candles = () => (
  <g shapeRendering="crispEdges">
    {closes.map((close, i) => {
      const open = i === 0 ? close + 18 : closes[i - 1];
      const x = 13 + i * 8;
      const top = Math.min(open, close);
      const h = Math.max(Math.abs(open - close), 3);
      return (
        <g key={i}>
          <line x1={x + 0.5} x2={x + 0.5} y1={top - noise(i, 1)} y2={top + h + noise(i, 2)} stroke="#fff" />
          <rect x={x - 1.5} y={top + 0.5} width={4} height={h} fill={close < open ? "#00e000" : "#f00000"} stroke="#fff" />
        </g>
      );
    })}
  </g>
);

const MainChart = () => (
  <Plot top={81} height={387} grid={[]}>
    <g fill="none" shapeRendering="crispEdges">
      <polyline points={maUpper} stroke="#e00000" strokeDasharray="3 3" />
      <polyline points={maLower} stroke="#0a8a0a" strokeDasharray="3 3" />
      <polyline points={maMiddle} stroke="#34c034" />
      {fans.map(([a, b, c, d], i) => (
        <line key={i} x1={a} y1={b} x2={c} y2={d} stroke="#e80000" strokeDasharray="3 3" />
      ))}
      <polyline points={zigzag} stroke="#f00000" strokeWidth="2" />
    </g>
    <line x1={724} y1={82} x2={1887} y2={183} stroke="#f00000" strokeWidth="1.5" />
    <Candles />
    <polygon points="1505,82 1513,82 1509,87" fill="#ffff00" />
    {priceLabels.map((p, i) => (
      <g key={p}>
        <line x1={1887} x2={1891} y1={112 + i * 32} y2={112 + i * 32} stroke="#ddd" />
        <text x={1892} y={112 + i * 32} fill="#e8e8e8">{p}</text>
      </g>
    ))}
    <text x={1892} y={464} fill="#e8e8e8">1.26170</text>
    <text x={17} y={89} fill="#eee">EURUSDm,M30  1.31554 1.31582 1.31513 1.31556</text>
    <OverlayGroup>
      <Notes list={mainNotes} />
    </OverlayGroup>
    <g stroke="#a8d8f0" fill="none">
      <circle cx={1876} cy={91} r={5.5} />
      <path d="M1873.5 92.5c1 2 4 2 5 0M1874 89v1M1878 89v1" />
    </g>
  </Plot>
);

const notes2 = [
  N(17, 479.5, "LuKu_StdDev3Sok_v10_30 0.1177 0.7358 -0.4732"),
  N(1892, 476, "3.3392"), N(1892, 480, "2"), N(1892, 492, "0.00"), N(1892, 505, "-2"), N(1892, 510, "-3.3797"),
  N(1844, 498, "2 3--1", "#fff", 13), N(1844, 512, "1 3--2", "#00e8ff", 13),
];
const notes3 = [
  N(17, 529.5, "PLOrders 2 0.0000 -33.1300 -33.1300"),
  N(1890, 526, "-9000000"), N(1890, 556, "0"), N(1890, 588, "9000000"),
];
const notes4 = [
  N(17, 607.5, "LuKu_StdDev3Sok_v10_30 0.7707 0.9808 -0.0585"),
  N(1890, 604, "4.0693"), N(1890, 618, "2"), N(1890, 639, "0.00"), N(1890, 659, "-2"), N(1890, 681, "-4.7334"),
];
const notes5 = [
  N(17, 700.5, "SOK 6-7 universal_3dvojpary  //  28887 0.0079 0.0195 -0.0275"),
  N(23, 719, "EURUSDm[5]", "#00ffff", 12, "start", 700),
  N(23, 733.5, "GBPUSDm[5]", "#ff0000", 12, "start", 700),
  N(23, 748.5, "EURGBPm[5]", "#ffff00", 12, "start", 700),
  N(1890, 697, "0.0741"), N(1890, 748, "0.00"), N(1890, 788, "-0.0565"),
];

const timeLabels = [
  "10 Jan 2012", "10 Jan 16:00", "10 Jan 20:00", "11 Jan 00:00", "11 Jan 04:00", "11 Jan 08:00", "11 Jan 12:00", "11 Jan 16:00", "11 Jan 20:00",
  "12 Jan 00:00", "12 Jan 04:00", "12 Jan 08:00", "12 Jan 12:00", "12 Jan 16:00", "12 Jan 20:00", "13 Jan 00:00", "13 Jan 04:00", "13 Jan 08:00",
  "13 Jan 12:00", "13 Jan 16:00", "13 Jan 20:00", "16 Jan 02:00", "16 Jan 06:00", "16 Jan 10:00", "16 Jan 14:00", "16 Jan 18:00", "16 Jan 22:03",
  "17 Jan 02:00", "17 Jan 06:00", "17 Jan 10:00",
];

const chartTabs = ["AUDCHFm,M30", "EURCADm,M30", "GBPJPYm,M30", "USDJPYm,M30", "EURUSDm,M30", "AUDCHFm,H1", "EURUSDm,H1", "AUDCHFm,H1", "NZDJPYm,M30", "GBPNZDm,M30"];
const headers = ["Time", "Type", "Size", "Symbol", "Price", "S / L", "T / P", "Price", "Commission", "Swap", "Pro"];

const rows = [
  ["43032723", "2012.02.14 05:32", "sell", "0.25", "gbpjpym", "122.292", "0.000", "0.000", "125.897", "0.00", "-1.37", "-113."],
  ["43032724", "2012.02.14 05:32", "sell", "0.34", "nzdjpym", "64.576", "0.000", "0.000", "66.303", "0.00", "-2.10", "-73."],
  ["43032725", "2012.02.14 05:32", "buy", "0.43", "gbpnzdm", "1.89370", "0.00000", "0.00000", "1.89875", "0.00", "-3.90", "18."],
  ["43056856", "2012.02.16 10:46", "sell", "0.25", "gbpjpym", "123.468", "0.000", "0.000", "125.897", "0.00", "-0.46", "-76."],
  ["43056857", "2012.02.16 10:46", "sell", "0.29", "nzdjpym", "65.019", "0.000", "0.000", "66.303", "0.00", "-0.60", "-46."],
  ["43056858", "2012.02.16 10:46", "buy", "0.40", "gbpnzdm", "1.89894", "0.00000", "0.00000", "1.89875", "0.00", "-1.22", "-0."],
  ["43063198", "2012.02.16 17:16", "buy", "0.30", "usdjpym", "78.835", "0.000", "0.000", "79.481", "0.00", "-0.12", "24."],
  ["43063199", "2012.02.16 17:16", "buy", "0.22", "usdchfm", "0.92158", "0.00000", "0.00000", "0.91834", "0.00", "-0.04", "-7."],
];

const terminalTabs = ["Account History", "News", "Alerts", "Mailbox", "Experts", "Journal"];
const periods = [
  ["M1", 2], ["M5", 3], ["M15", 3], ["M30", 4], ["H1", 3], ["H4", 2], ["D1", 4], ["W1", 3], ["MN", 3],
] as const;

export default function App() {
  return (
    <>
      <GlobalStyle />
      <Window>
        <TitleBar>
          <TitleIcon />
          <span>48544: Interbank FX Trader 4 - [EURUSDm,M30]</span>
          <WindowButtons>
            <WindowButton $w={29}>–</WindowButton>
            <WindowButton $w={26}>▫</WindowButton>
            <WindowButton $w={45} $close>
              x
            </WindowButton>
          </WindowButtons>
        </TitleBar>
        <Body>
          <MenuBar>
            <AppIcon />
            <MenuItem $ml={5}>File</MenuItem>
            <MenuItem $ml={16}>View</MenuItem>
            <MenuItem $ml={18}>Insert</MenuItem>
            <MenuItem $ml={16}>Charts</MenuItem>
            <MenuItem $ml={17}>Tools</MenuItem>
            <MenuItem $ml={18}>Window</MenuItem>
            <MenuItem $ml={19}>Help</MenuItem>
            <ChildButtons>
              <ChildButton>_</ChildButton>
              <ChildButton>❐</ChildButton>
              <ChildButton>×</ChildButton>
            </ChildButtons>
          </MenuBar>
          <Toolbar>
            <Grip $ml={4} />
            <Tool $w={22} $ml={3}><IconNewChart /></Tool>
            <Caret />
            <Tool $w={22} $ml={5}><IconProfiles /></Tool>
            <Caret />
            <Sep $ml={4} />
            <Tool $ml={4}><IconMarket /></Tool>
            <Tool $ml={4}><IconCrosshair /></Tool>
            <Tool><IconFolderStar /></Tool>
            <Tool $active><IconTerminal /></Tool>
            <Tool><IconTester /></Tool>
            <Sep $ml={4} />
            <Tool $w={86} $ml={6}><IconNewOrder />New Order</Tool>
            <Tool $w={24} $ml={0}><IconWarn /></Tool>
            <Tool $w={109} $ml={4} $active><IconExpert />Expert Advisors</Tool>
            <Sep $ml={3} />
            <Sep $ml={1} />
            <Grip $ml={0} />
            <Tool $ml={4}><IconBars /></Tool>
            <Tool $active><IconCandles /></Tool>
            <Tool><IconLine /></Tool>
            <Tool $ml={9}><IconZoom plus /></Tool>
            <Tool><IconZoom /></Tool>
            <Sep $ml={5} />
            <Tool><IconScroll /></Tool>
            <Tool $active><IconShift /></Tool>
            <Sep $ml={5} />
            <Tool $w={22} $ml={5}><IconIndicators /></Tool>
            <Caret />
            <Tool $w={22} $ml={5}><IconClock /></Tool>
            <Caret />
            <Tool $w={22} $ml={5}><IconTemplate /></Tool>
            <Caret />
            <Sep $ml={2} />
            <Sep $ml={11} />
            <Grip $ml={3} />
            {periods.map(([p, ml]) => (
              <Period key={p} $ml={ml} $active={p === "M30"}>{p}</Period>
            ))}
            <Sep $ml={3} />
            <Sep $ml={6} />
            <Grip $ml={2} />
            <Tool $active><IconCursor /></Tool>
            <Tool><IconCross /></Tool>
            <Sep $ml={5} />
            <Tool $ml={5}><Svg><path d="M9 2v14" stroke="#444" /></Svg></Tool>
            <Tool><Svg><path d="M2 9h14" stroke="#444" /></Svg></Tool>
            <Tool><Svg><path d="M3 15L15 3" stroke="#555" /></Svg></Tool>
            <Tool><IconChannel /></Tool>
            <Tool><IconFibo /></Tool>
            <Tool>
              <Svg><path d="M4.5 16L9 2l4.5 14M6 11h6" stroke="#444" strokeWidth="1.3" /></Svg>
            </Tool>
            <Tool><IconLabel /></Tool>
            <Tool><IconRect /></Tool>
            <Tool $w={22}><IconArrows /></Tool>
            <Caret />
            <Sep $ml={4} />
          </Toolbar>
          <ChartArea>
            <Panels>
              <MainChart />
              <Plot top={469} height={49} grid={[480, 493, 507]}>
                <Lines series={std1} colors={stdColors} />
                <Notes list={notes2} />
              </Plot>
              <Plot top={519} height={77} grid={[557]}>
                <Notes list={notes3} />
              </Plot>
              <Plot top={597} height={92} grid={[619, 640, 660]}>
                <Lines series={std2} colors={stdColors} />
                <Notes list={notes4} />
              </Plot>
              <Plot top={690} height={105} grid={[749]}>
                <Lines series={sok} colors={sokColors} />
                <Notes list={notes5} />
              </Plot>
            </Panels>
            <TimeAxis>
              {timeLabels.map((t, i) => (
                <TimeCell key={i}>{t}</TimeCell>
              ))}
            </TimeAxis>
            <DatePill>2012.01.11 16:00</DatePill>
          </ChartArea>
          <ChartTabs>
            <ChartTab $active>EURUSDm,M30</ChartTab>
            {chartTabs.map((t, i) => (
              <ChartTab key={i}>{t}</ChartTab>
            ))}
            <TabArrows>
              <ArrowLeft />
              <ArrowRight />
            </TabArrows>
          </ChartTabs>
          <Terminal>
            <SideStrip>
              <CloseX>×</CloseX>
              <TerminalLabel>
                <VerticalText>Terminal</VerticalText>
              </TerminalLabel>
            </SideStrip>
            <TerminalMain>
              <TableWrap>
                <Table>
                  <HeaderRow>
                    <HeaderCell $left>
                      Order<SortMark>⁄</SortMark>
                    </HeaderCell>
                    {headers.map((h, i) => (
                      <HeaderCell key={i}>{h}</HeaderCell>
                    ))}
                  </HeaderRow>
                  {rows.map((r, i) => (
                    <Row key={r[0]} $alt={i % 2 === 1}>
                      <OrderCell>
                        <IconTicket sell={r[2] === "sell"} />
                        {r[0]}
                      </OrderCell>
                      {r.slice(1, 11).map((c, j) => (
                        <Cell key={j}>{c}</Cell>
                      ))}
                      <ClippedCell>{r[11]}</ClippedCell>
                    </Row>
                  ))}
                  <RowStub>
                    {headers.concat("").map((_, i) => (
                      <StubCell key={i} />
                    ))}
                  </RowStub>
                </Table>
                <VScroll>
                  <ArrowUp />
                  <VThumb>≡</VThumb>
                  <ArrowDown />
                </VScroll>
              </TableWrap>
              <HScroll>
                <HArrowCell $w={18}><ArrowLeft /></HArrowCell>
                <HThumb>|||</HThumb>
                <HArrowCell $w={37}><ArrowRight /></HArrowCell>
              </HScroll>
              <TerminalTabs>
                <TerminalTab $active>Trade</TerminalTab>
                {terminalTabs.map((t) => (
                  <TerminalTab key={t}>{t}</TerminalTab>
                ))}
              </TerminalTabs>
            </TerminalMain>
          </Terminal>
          <StatusBar>
            <StatusField $w={1197} $first>For Help, press F1</StatusField>
            <StatusField $w={113}>Default</StatusField>
            <StatusField $w={103}>2012.01.12 07:00</StatusField>
            <StatusField $w={70}>O: 1.27146</StatusField>
            <StatusField $w={71}>H: 1.27236</StatusField>
            <StatusField $w={69}>L: 1.27103</StatusField>
            <StatusField $w={70}>C: 1.27136</StatusField>
            <StatusField $w={66}>V: 2185</StatusField>
            <ConnField $w={110}>
              <ConnIcon />
              366/1 kb
            </ConnField>
            <ResizeGrip />
          </StatusBar>
        </Body>
      </Window>
    </>
  );
}
